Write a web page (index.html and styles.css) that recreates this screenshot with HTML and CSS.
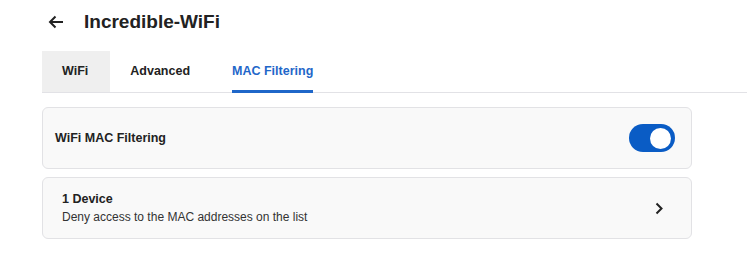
FILE: index.html
```html
<!DOCTYPE html>
<html>
  <head>
    <meta charset="UTF-8" />
    <meta name="viewport" content="width=device-width, initial-scale=1.0" />
    <title>Incredible-WiFi</title>
    <link rel="stylesheet" href="styles.css">
  </head>
  <body>
    <div class="header">
      <svg class="back" width="16" height="14" viewBox="0 0 16 14">
        <path d="M15 7H2M7.5 1.5L2 7l5.5 5.5" fill="none" stroke="#222" stroke-width="2"/>
      </svg>
      <h1>Incredible-WiFi</h1>
    </div>

    <div class="tabs">
      <div class="tab tab-hover">WiFi</div>
      <div class="tab">Advanced</div>
      <div class="tab active">MAC Filtering</div>
    </div>

    <div class="cards">
      <div class="card">
        <span class="card-title">WiFi MAC Filtering</span>
        <div class="toggle"><div class="knob"></div></div>
      </div>
      <div class="card card-link">
        <div class="card-text">
          <div class="card-title">1 Device</div>
          <div class="card-sub">Deny access to the MAC addresses on the list</div>
        </div>
        <svg class="chevron" width="8" height="13" viewBox="0 0 8 13">
          <path d="M1.5 1.5l5 5-5 5" fill="none" stroke="#222" stroke-width="2"/>
        </svg>
      </div>
    </div>
  </body>
</html>
```

FILE: styles.css
```css
* {
  box-sizing: border-box;
  margin: 0;
  padding: 0;
}

body {
  font-family: "Liberation Sans", Arial, sans-serif;
  background-color: #fff;
  color: #222;
  width: 756px;
  height: 267px;
  overflow: hidden;
}

.header {
  display: flex;
  align-items: center;
  height: 44px;
  padding-left: 48px;
}

.header .back {
  margin-right: 20px;
}

h1 {
  font-size: 19px;
  font-weight: bold;
  color: #222;
}

.tabs {
  display: flex;
  margin: 7px 9px 0 42px;
  border-bottom: 1px solid #e2e2e6;
  height: 42px;
}

.tab {
  font-size: 12.5px;
  font-weight: bold;
  line-height: 40px;
  padding: 0 20px;
  color: #222;
}

.tab-hover {
  background-color: #efefef;
  padding: 0 22px 0 20px;
}

.tab.active {
  color: #1f67c9;
  border-bottom: 3px solid #1f67c9;
  padding: 0;
  margin-left: 22px;
  height: 42px;
}

.cards {
  padding: 14px 0 0 42px;
  width: 692px;
}

.card {
  display: flex;
  align-items: center;
  justify-content: space-between;
  background-color: #f9f9f9;
  border: 1px solid #e2e2e5;
  border-radius: 6px;
  height: 62px;
  padding: 0 16px 0 12px;
  margin-bottom: 8px;
}

.card-title {
  font-size: 12.5px;
  font-weight: bold;
}

.toggle {
  width: 46px;
  height: 28px;
  border-radius: 14px;
  background-color: #0a5cc5;
  display: flex;
  align-items: center;
  justify-content: flex-end;
  padding-right: 4px;
}

.knob {
  width: 21px;
  height: 21px;
  border-radius: 50%;
  background-color: #fff;
}

.card-link {
  padding: 0 28px 0 19px;
}

.card-sub {
  font-size: 12px;
  color: #333;
  margin-top: 4px;
}
```
